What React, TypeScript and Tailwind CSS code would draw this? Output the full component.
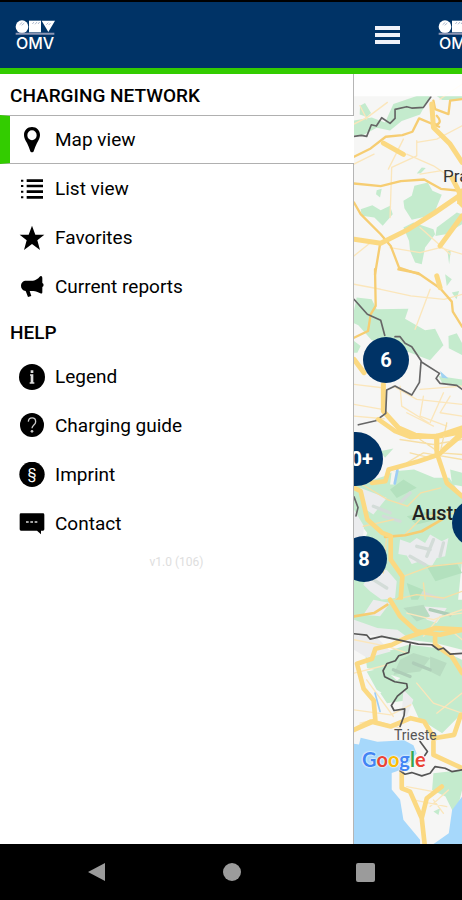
import type { ReactNode } from "react";

function OmvLogo() {
  return (
    <div className="w-10 shrink-0 font-['Inter',sans-serif] text-white">
      <svg viewBox="0 0 120 45" className="block w-10" aria-hidden="true">
        <circle cx="21" cy="20" r="19" fill="#fff" />
        <path d="M42 2h36v35H42z" fill="#fff" />
        <path d="M80 2h40l-20 34z" fill="#fff" />
        <path d="M14 14l8-7M20 16l8-7M52 12l5-6M60 13l6-7M69 12l5-6M94 14l6-6M101 15l6-6" stroke="#8395b5" strokeWidth="2" />
        <path d="M2 38h116v6H2z" fill="#8d96b4" />
      </svg>
      <div className="text-center text-base/4 font-medium">OMV</div>
    </div>
  );
}

function Icon({ children }: { children: ReactNode }) {
  return (
    <svg viewBox="0 0 78 78" className="size-[26px] shrink-0" fill="#000" aria-hidden="true">
      {children}
    </svg>
  );
}

const pinIcon = (
  <Icon>
    <path fillRule="evenodd" d="M39 0C25 0 15 10 15 24c0 9 4 15 9 24 4 8 7 16 10 25 1 4 9 4 10 0 3-9 6-17 10-25 5-9 9-15 9-24C63 10 53 0 39 0zm0 10a14 15 0 1 1 0 30 14 15 0 0 1 0-30z" />
  </Icon>
);

const listIcon = (
  <Icon>
    <path d="M23 14h49M23 30h49M23 47h49M23 64h49" stroke="#000" strokeWidth="8" />
    <path d="M6 14h7M6 30h7M6 47h7M6 64h7" stroke="#000" strokeWidth="6" />
  </Icon>
);

const starIcon = (
  <Icon>
    <path d="M39 2l10 27h27L55 46l8 29-24-18-24 18 8-29L2 29h27z" />
  </Icon>
);

const megaphoneIcon = (
  <Icon>
    <path d="M66 6c3 0 4 3 4 7v14c5 2 5 10 0 12v15c0 4-2 6-6 4-7-4-14-6-21-7H32l5 15-10 3-7-18c-9-1-14-7-14-15 0-10 6-16 16-16h20c8-2 15-6 20-12 1-1 2-2 4-2z" />
  </Icon>
);

const infoIcon = (
  <Icon>
    <circle cx="39" cy="39" r="39" />
    <path d="M35 19h8v8h-8zM33 31h10v24h3v4H32v-4h3V35h-2z" fill="#ddd" />
  </Icon>
);

const questionIcon = (
  <Icon>
    <circle cx="39" cy="36" r="36" />
    <path d="M28 26c1-15 22-15 22 0 0 10-11 10-11 20" fill="none" stroke="#ccc" strokeWidth="4" />
    <circle cx="39" cy="55" r="4" fill="#ccc" />
  </Icon>
);

const paragraphIcon = (
  <Icon>
    <circle cx="39" cy="37" r="38" />
    <text x="39" y="50" textAnchor="middle" fill="#fff" fontSize="42" fontFamily="Roboto, sans-serif">§</text>
  </Icon>
);

const chatIcon = (
  <Icon>
    <path d="M6 7h66q4 0 4 4v44q0 4-4 4h-6v11L54 59H6q-4 0-4-4V11q0-4 4-4z" />
    <path d="M21 33h8M34 33h8M47 33h8" stroke="#ddd" strokeWidth="5" />
  </Icon>
);

type Entry = { label: string; icon: ReactNode; active?: boolean };

const network: Entry[] = [
  { label: "Map view", icon: pinIcon, active: true },
  { label: "List view", icon: listIcon },
  { label: "Favorites", icon: starIcon },
  { label: "Current reports", icon: megaphoneIcon },
];

const help: Entry[] = [
  { label: "Legend", icon: infoIcon },
  { label: "Charging guide", icon: questionIcon },
  { label: "Imprint", icon: paragraphIcon },
  { label: "Contact", icon: chatIcon },
];

function MenuSection({ title, entries }: { title: string; entries: Entry[] }) {
  return (
    <section>
      <h2 className="h-[41px] border-r border-[#b5b5b5] pl-[10px] text-[19px]/[43px] font-medium">{title}</h2>
      <ul>
        {entries.map((e) => (
          <li key={e.label}>
            <a
              href="#"
              aria-current={e.active ? "page" : undefined}
              className={
                e.active
                  ? "flex h-[49px] items-center gap-[10px] border-y border-l-[10px] border-y-[#b0b0b0] border-l-[#33cc00] pl-[9px]"
                  : "flex h-[49px] items-center gap-[10px] border-r border-[#b5b5b5] pl-[19px]"
              }
            >
              {e.icon}
              <span className="text-[19px]/[24px]">{e.label}</span>
            </a>
          </li>
        ))}
      </ul>
    </section>
  );
}

function MapDrawing() {
  return (
    <svg viewBox="354 75 108 769" preserveAspectRatio="xMinYMin slice" className="absolute inset-0 size-full" aria-hidden="true">
      <path d="M340 75h130v780H340z" fill="#f6f6f5" />

      {/* Bohemia */}
      <g transform="translate(340 75) scale(.33333)" fill="none" strokeLinejoin="round" strokeLinecap="round">
        <g fill="#c4ebcd">
          <path d="M60 95l15-8 18 30-12 12-22-8zM40 140l55-10 40 15 25-55 70-24h40l-30 55-55 20-35 28-40-8-40 22H42zM290 66h76v12h-60z" />
          <path d="M190 380l25-15 8-30 40-10 14 25 28 12-25 60-65 15-22-35zM62 405l35-12 25 15 28-13 8 25-30 35-25-25-38-5zM190 460l30-15 60 20 5 15-30 40 -10 50-20-5-15-35 -3-30zM290 460l60-45 16 5v30l-50 30-30 5zM110 348l15-4-5 26-12-10zM230 298l15-18 12 2-15 15zM322 530h10l-5 40z" />
        </g>
        <g stroke="#fbe6bb" strokeWidth="4">
          <path d="M42 150l40-20 60-45M230 200v45l-75 35-5 150M190 195l-45 90M230 205l60-10 76-40M200 240l80 35 60 40M42 270l60-30M240 300l60-10M300 75l66-45M60 95l20 40M150 520l90 15 60-15 66 20M240 460l90 80M42 545l50-40" />
        </g>
        <path d="M42 248l50-25 45-35 50-5 30-10 20-40 60 25M42 328l80 8 60-15 70-5 50 28 50 5M42 385l20 35 60 60 30 35 25 65 60 20M120 510l-15 90M280 80l5 25 40 15 5-40 36-5M290 125c20 20 0 30-5 25" stroke="#f6cd72" strokeWidth="7" />
        <path d="M42 495l80 12 80-40 80-50 84-58M275 90l5 70 50 50 36 55M130 207l60 34M300 515l66-90M335 310l31 60" stroke="#fbd982" strokeWidth="15" />
        <path d="M350 350l16-8v60l-15-15z" fill="#fbd982" />
        <path d="M42 187l22-3 16 3 14-35 15 4 16-25 25 17 15-15v-27l35-8 15 4 35-2 12-17 10-14" stroke="#666" strokeWidth="5" />
        <path d="M42 0h330v67H42z" fill="#fff" fillOpacity=".9" />
      </g>

      {/* Bavarian forest and the Danube */}
      <g transform="translate(340 270) scale(.33333)" fill="none" strokeLinejoin="round" strokeLinecap="round">
        <path d="M50 85l45 5 15 30 95-2-10 30 60 35 30-5 25 50-40 45-65-25-60-30-50-5-40-45-20-10zM325 200l25-8 16 30v35l-40-20zM315 15l20 15-15 20zM335 70l22-5-8 25zM295 320l71 10v20l-60-10zM42 215l20 15-10 20h-10z" fill="#c4ebcd" />
        <path d="M300 305l25 22-20-2z" fill="#9ed2f2" />
        <path d="M42 45l80 15 90 20 100 10 54-15M270 60l-45 120M160 350l70 40 136 15M180 350l5 60 80 50M240 360l126-10M250 380l-10 60 80 30M310 370l-40 90M42 405l85 15M42 345l85 10M42 440l90 8M330 380l-30 50 66 10M200 430l80 40" stroke="#fbe6bb" strokeWidth="4" />
        <path d="M105 0l2 110-15 25-8 50-42 20M175 0l60 12 65 45 35 40 3 30 28 45" stroke="#f6cd72" strokeWidth="7" />
        <path d="M130 345v80l45 50 50 22 60 5 81-15M290 510v30M366 490l-55 50M290 20l10 35M42 270l30 40" stroke="#fbd982" strokeWidth="15" />
        <path d="M42 90l40 45 40 18 12 45M165 202h15l15 20 20 10 28 42-5 65-23 38-50-27-25 12-3 70-30 22-52 12M243 277l55 35-10 15 12 15 50 6 16 12" stroke="#666" strokeWidth="5" />
      </g>

      {/* Alps */}
      <g transform="translate(340 420) scale(.33333)" fill="none" strokeLinejoin="round" strokeLinecap="round">
        <path d="M42 200l90-30 30-15 60-5 60 25h45l39 55v190l-20 200H42V430l40-90-40-50z" fill="#c4ebcd" />
        <path d="M120 95l40-8-25 28zM330 150l36 10v40l-30-5z" fill="#c4ebcd" />
        <path d="M60 205l80 30-40 50-30-20zM180 360l30 10 20-15 25 15 15-25 35 20 20-10-10 55-25 5-15 25-35-15-25 8-15-25-25-5zM90 460l50-10 30 35-5 50-40 5-35-25-20-20zM42 270l30 50-10 100-20 5zM300 590l40-20 26 10v30h-60z" fill="#ebecee" />
        <path d="M150 210l40-30 40 25-60 30zM200 290l70-15 40 20-80 20zM260 440l90-10 16 30-80 25zM200 490l50 20-30 55zM80 560l80-15 25 30-90 25z" fill="#b3e1be" />
        <path d="M100 260l50 20M180 250l30-30M230 380l40 10M280 360l-20 50M310 370l-10 40M210 410l45 25M100 480l40 25M250 520l70 25M190 550l60 10M130 290l50 15" stroke="#d3dcd8" strokeWidth="10" />
        <path d="M155 155h15l-5 40h-15z" fill="#f5f5f0" />
        <path d="M172 152l-8 40" stroke="#9ccdf5" strokeWidth="8" />
        <path d="M42 180l100 60 60 20 40-40 60-15M180 60l100 15 86-15M210 100l60 15M190 350l60-60 116-10M70 320l90-20M190 470l80-30 96-10M140 545l90-20 80 10 56-20M240 60l60 40M320 10l-20 90 66 5M250 490l10 90M200 130l50-30 116 20M140 350l-10 110" stroke="#f7dfa6" strokeWidth="4" />
        <path d="M135 352l60-5 50-12 60-35M42 590l70-10 40-25" stroke="#f6cd72" strokeWidth="8" />
        <path d="M115 0l50 35 45 17 80-2 76-25M290 50v50l30 90 46 40M366 45l-70 60-60 20-90 25-10 35-40 5M42 205l20 10 20 85 45 40 25 10v70l35 50-5 65-30 30 50 50" stroke="#fbd982" strokeWidth="14" />
        <path d="M42 232l12 32-6 25" stroke="#666" strokeWidth="5" />
      </g>

      {/* Adriatic coast */}
      <g transform="translate(340 600) scale(.33333)" fill="none" strokeLinejoin="round" strokeLinecap="round">
        <path d="M42 0h324v150l-80-20-80-10-60-5-104-30zM205 135l85 10 76 35v160l-60 60-70-45-25-55-70 10-20-30 60-45-60-20-40-10-5-40 50-5zM80 215l50-10 60 55-30 40-50-30zM280 520l86-10v60l-20 80-30-60-40-20zM280 635l20-10-5 20z" fill="#c4ebcd" />
        <path d="M42 60l70 25 60 5 40 30-170-20zM100 0l50 10-30 40-50-5zM240 20l80 5-30 45-30-10zM42 105l70 10 40 40-70 20-40-25zM190 270l30 30-20 50-15-10z" fill="#ececed" />
        <path d="M180 180l40-20 50 15-30 40-80 10zM190 25l60-10 20 35-40 15zM270 170l50 20-20 40-30-15z" fill="#b8dcc1" />
        <path d="M220 190l50 20M160 210l50 20M270 30l60 15" stroke="#aecdb8" strokeWidth="10" />
        <path d="M42 120l100 20 60 20M200 40l80 20 86-30M42 220l100-25M42 330l110 15 60-30M60 370l40-10 80 25M230 250l50 60 86 30M80 240l80 110M250 110l50-60 66-10M290 340l76-60M270 620l55-50M330 90l36 30M200 560l80 15M220 600l100 20M280 600l30 40" stroke="#fbe6bb" strokeWidth="4" />
        <path d="M42 50l60-10 40-25" stroke="#f6cd72" strokeWidth="8" />
        <path d="M150 0l30 50 50 45 70 10 66-15M366 90l-80-5-90 30-40 20-50 12-10 30-45 15 20 75 30 35 5 60-64 28M42 390l50-25 60 15 60-25 40 10 30 50 60-10 20-60M285 110v25l50 35 31 50M280 425v40l86 40" stroke="#fbd982" strokeWidth="14" />
        <path d="M105 280l15 55" stroke="#9ccdf5" strokeWidth="5" />
        <path d="M42 432l15 2 5-20 50 12 80-5 28 15 10 25-40 45-20 8-15 5v50l25 30 10 60 50 60v40H42zM366 590l-30 40-10 70-50 35v20h90z" fill="#a6d8fb" />
        <path d="M185 515v50l25 10 35 80 10 90M245 655l15-60 45-35" stroke="#fbd982" strokeWidth="14" />
        <path d="M42 102l38 4 10 12 35-8 85 18 25 5 40 2 20 15 15-5 20 18 36-2M210 133l-4 25-30 10-10 15-25 8-12 22 5 18 30 15 36 6 2 12-30 25-18 28 8 15 32-5-2 20-12 33M240 425l22 30-8 12M180 513l15 10 20-5 30 10 25-8 15-20 30 5 20 10 31-5" stroke="#555" strokeWidth="5" />
      </g>
    </svg>
  );
}

const pinBase =
  "absolute flex items-center justify-center rounded-full bg-[#003366] text-[20px]/[24px] font-bold text-white";

function MapPanel() {
  return (
    <main className="relative min-w-0 flex-1 overflow-hidden">
      <MapDrawing />
      <span className="absolute top-[91px] left-[89px] text-[17px]/[22px] text-[#333]">Prague</span>
      <span className="absolute top-[427px] left-[58px] text-[20px]/[24px] font-medium text-[#222]">Austria</span>
      <span className="absolute top-[652px] left-[40px] text-[14px]/[18px] text-[#555]">Trieste</span>
      <button className={`${pinBase} top-[263px] left-[9px] size-[46px]`}>6</button>
      <button className={`${pinBase} top-[358px] left-[-25px] size-[54px]`}>10+</button>
      <button className={`${pinBase} top-[462px] left-[-13px] size-[46px]`}>8</button>
      <button aria-label="Charging stations" className={`${pinBase} top-[425px] left-[98px] size-[48px]`} />
      <div className="absolute top-[673px] left-2 font-['Lato',sans-serif] text-[20px]/[24px] font-bold [text-shadow:0_0_2px_#fff,0_0_2px_#fff]">
        <span className="text-[#4285f4]">G</span>
        <span className="text-[#ea4335]">o</span>
        <span className="text-[#fbbc05]">o</span>
        <span className="text-[#4285f4]">g</span>
        <span className="text-[#34a853]">l</span>
        <span className="text-[#ea4335]">e</span>
      </div>
    </main>
  );
}

export default function App() {
  return (
    <div className="flex min-h-screen flex-col overflow-hidden bg-white font-['Roboto',sans-serif] text-black">
      <header className="flex h-[74px] items-center overflow-hidden border-t-2 border-b-[6px] border-t-black border-b-[#33cc00] bg-[#003366] pl-[15px]">
        <OmvLogo />
        <div className="flex-1" />
        <button aria-label="Menu" className="mr-[38px] flex w-[25px] shrink-0 flex-col gap-[3px]">
          <span className="h-1 bg-[#f0f2f8]" />
          <span className="h-1 bg-[#f0f2f8]" />
          <span className="h-1 bg-[#f0f2f8]" />
        </button>
        <div className="w-6 shrink-0">
          <OmvLogo />
        </div>
      </header>

      <div className="flex flex-1">
        <nav className="flex w-[354px] shrink-0 flex-col">
          <MenuSection title="CHARGING NETWORK" entries={network} />
          <MenuSection title="HELP" entries={help} />
          <p className="flex-1 border-r border-[#b5b5b5] pt-1.5 text-center text-[12px]/[16px] text-[#dedede]">v1.0 (106)</p>
        </nav>
        <MapPanel />
      </div>

      <footer className="flex h-14 items-center justify-between bg-black px-[87px]">
        <button aria-label="Back">
          <svg viewBox="0 0 20 20" className="size-5" aria-hidden="true">
            <path d="M1 10L18 1v18z" fill="#9b9b9b" />
          </svg>
        </button>
        <button aria-label="Home" className="size-[18px] rounded-full bg-[#9b9b9b]" />
        <button aria-label="Recent apps" className="size-[19px] rounded-xs bg-[#9b9b9b]" />
      </footer>
    </div>
  );
}
